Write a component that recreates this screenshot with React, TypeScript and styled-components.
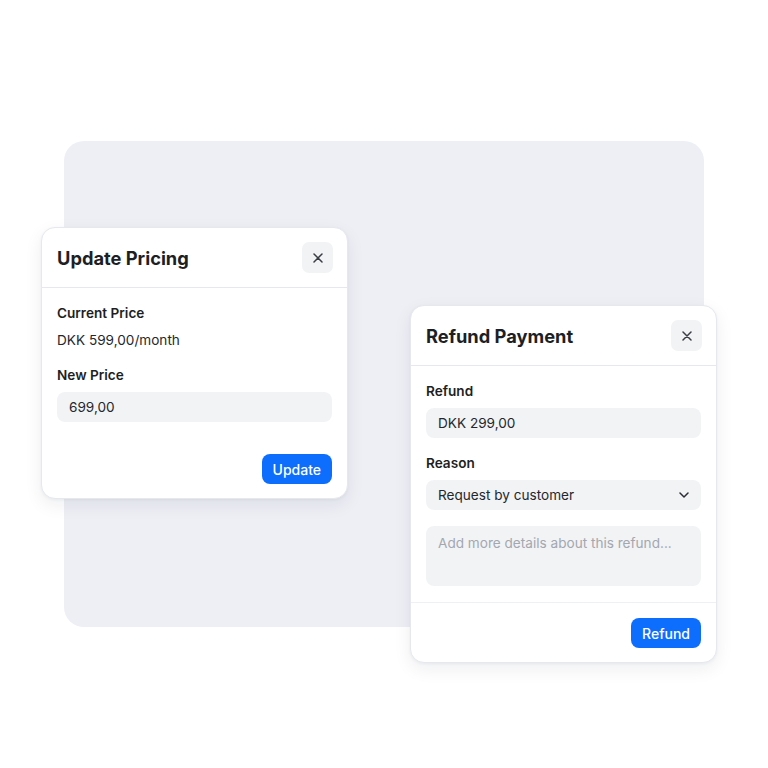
import React from 'react'
import styled, { createGlobalStyle } from 'styled-components'

const GlobalStyle = createGlobalStyle`
  html, body {
    margin: 0;
    padding: 0;
    background: #ffffff;
  }
  body {
    font-family: Inter, "Noto Sans", "Liberation Sans", sans-serif;
    color: #1d1f24;
    -webkit-font-smoothing: antialiased;
  }
`

const Stage = styled.div`
  position: relative;
  width: 768px;
  height: 768px;
  overflow: hidden;
`

const Backdrop = styled.div`
  position: absolute;
  left: 64px;
  top: 141px;
  width: 640px;
  height: 486px;
  border-radius: 20px;
  background: #eeeff5;
`

const Card = styled.div<{ $left: number; $top: number }>`
  position: absolute;
  left: ${(p) => p.$left}px;
  top: ${(p) => p.$top}px;
  width: 307px;
  display: flex;
  flex-direction: column;
  background: #ffffff;
  border: 1px solid #e6e8ee;
  border-radius: 14px;
  box-shadow: 0 6px 18px rgba(20, 30, 60, 0.07), 0 1px 3px rgba(20, 30, 60, 0.05);
  box-sizing: border-box;
`

const Header = styled.div`
  height: 60px;
  display: flex;
  align-items: center;
  justify-content: space-between;
  padding: 0 14px 0 15px;
  border-bottom: 1px solid #e6e8ee;
  box-sizing: border-box;
`

const Title = styled.h2`
  margin: 0;
  font-size: 18.3px;
  font-weight: 650;
  color: #1d1f24;
`

const CloseButton = styled.button`
  width: 31px;
  height: 31px;
  display: flex;
  align-items: center;
  justify-content: center;
  border: none;
  border-radius: 7px;
  background: #f2f3f5;
  color: #3a3d44;
  padding: 0;
  cursor: pointer;
`

const Body = styled.div`
  display: flex;
  flex-direction: column;
  padding: 16px 15px;
`

const Label = styled.div<{ $gapTop?: number }>`
  font-size: 13.6px;
  line-height: 18px;
  font-weight: 600;
  color: #1d1f24;
  margin-top: ${(p) => p.$gapTop ?? 0}px;
  margin-bottom: 8px;
`

const Value = styled.div`
  font-size: 13.6px;
  line-height: 20px;
  color: #24272d;
`

const Field = styled.div<{ $gapTop?: number; $tall?: boolean; $muted?: boolean }>`
  height: ${(p) => (p.$tall ? 60 : 30)}px;
  margin-top: ${(p) => p.$gapTop ?? 0}px;
  display: flex;
  align-items: ${(p) => (p.$tall ? 'flex-start' : 'center')};
  justify-content: space-between;
  padding: ${(p) => (p.$tall ? '9px 12px' : '0 12px')};
  border-radius: 8px;
  background: #f2f3f5;
  font-size: 13.6px;
  color: ${(p) => (p.$muted ? '#a3a7b0' : '#24272d')};
  box-sizing: border-box;
`

const Footer = styled.div<{ $divider?: boolean }>`
  display: flex;
  justify-content: flex-end;
  padding: ${(p) => (p.$divider ? '15px 15px 14px' : '16px 15px 14px')};
  border-top: ${(p) => (p.$divider ? '1px solid #eef0f3' : 'none')};
`

const PrimaryButton = styled.button`
  height: 30px;
  padding: 0 11px;
  border: none;
  border-radius: 8px;
  background: #0d6efd;
  color: #ffffff;
  font-family: inherit;
  font-size: 14px;
  font-weight: 500;
  cursor: pointer;
`

const CloseIcon = () => (
  <svg width="10" height="10" viewBox="0 0 10 10" fill="none">
    <path d="M1 1L9 9M9 1L1 9" stroke="currentColor" strokeWidth="1.5" strokeLinecap="round" />
  </svg>
)

const ChevronDown = () => (
  <svg width="10" height="6" viewBox="0 0 10 6" fill="none">
    <path d="M1 1L5 5L9 1" stroke="#2a2d33" strokeWidth="1.5" strokeLinecap="round" strokeLinejoin="round" />
  </svg>
)

export default function App() {
  return (
    <>
      <GlobalStyle />
      <Stage>
        <Backdrop />

        <Card $left={41} $top={227}>
          <Header>
            <Title>Update Pricing</Title>
            <CloseButton aria-label="Close">
              <CloseIcon />
            </CloseButton>
          </Header>
          <Body>
            <Label>Current Price</Label>
            <Value>DKK 599,00/month</Value>
            <Label $gapTop={16}>New Price</Label>
            <Field>699,00</Field>
          </Body>
          <Footer>
            <PrimaryButton>Update</PrimaryButton>
          </Footer>
        </Card>

        <Card $left={410} $top={305}>
          <Header>
            <Title>Refund Payment</Title>
            <CloseButton aria-label="Close">
              <CloseIcon />
            </CloseButton>
          </Header>
          <Body>
            <Label>Refund</Label>
            <Field>DKK 299,00</Field>
            <Label $gapTop={16}>Reason</Label>
            <Field>
              Request by customer
              <ChevronDown />
            </Field>
            <Field $gapTop={16} $tall $muted>
              Add more details about this refund...
            </Field>
          </Body>
          <Footer $divider>
            <PrimaryButton>Refund</PrimaryButton>
          </Footer>
        </Card>
      </Stage>
    </>
  )
}
